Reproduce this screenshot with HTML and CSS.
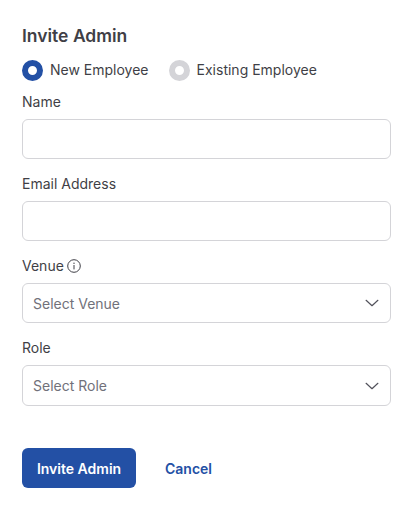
FILE: index.html
```html
<!DOCTYPE html>
<html lang="en">
<head>
<meta charset="utf-8">
<title>Invite Admin</title>
<link rel="stylesheet" href="styles.css">
</head>
<body>
<form class="modal">
  <h1 class="title">Invite Admin</h1>
  <div class="radios">
    <label class="radio"><span class="dot dot-on"></span>New Employee</label>
    <label class="radio"><span class="dot dot-off"></span>Existing Employee</label>
  </div>
  <div class="field">
    <div class="label">Name</div>
    <div class="input"></div>
  </div>
  <div class="field">
    <div class="label">Email Address</div>
    <div class="input"></div>
  </div>
  <div class="field">
    <div class="label">Venue
      <svg class="info" width="14" height="14" viewBox="0 0 14 14" fill="none" stroke="#3f3f46" stroke-width="1"><circle cx="7" cy="7" r="6.3"/><path d="M7 6.4v3.6" stroke-linecap="round"/><circle cx="7" cy="4.2" r="0.7" fill="#3f3f46" stroke="none"/></svg>
    </div>
    <div class="input select"><span>Select Venue</span>
      <svg width="14" height="8" viewBox="0 0 14 8" fill="none" stroke="#52525b" stroke-width="1.2" stroke-linecap="round" stroke-linejoin="round"><path d="M1.1 1.3 7 6.7l5.9-5.4"/></svg>
    </div>
  </div>
  <div class="field">
    <div class="label">Role</div>
    <div class="input select select-last"><span>Select Role</span>
      <svg width="14" height="8" viewBox="0 0 14 8" fill="none" stroke="#52525b" stroke-width="1.2" stroke-linecap="round" stroke-linejoin="round"><path d="M1.1 1.3 7 6.7l5.9-5.4"/></svg>
    </div>
  </div>
  <div class="actions">
    <button type="button" class="btn-primary">Invite Admin</button>
    <button type="button" class="btn-link">Cancel</button>
  </div>
</form>
</body>
</html>
```
FILE: styles.css
```css
* { box-sizing: border-box; }
html, body { margin: 0; background: #fff; }
body { width: 412px; height: 510px; overflow: hidden; font-family: Inter, "Liberation Sans", sans-serif; color: #3f3f46; }
.modal { padding: 24px 22px 0; display: flex; flex-direction: column; }
.title { margin: 0; font-size: 17.5px; line-height: 24px; font-weight: 600; color: #3f3f46; }
.radios { display: flex; gap: 20px; margin-top: 10px; height: 24px; align-items: center; }
.radio { display: flex; align-items: center; gap: 7px; font-size: 14px; line-height: 20px; }
.dot { width: 21px; height: 21px; border-radius: 50%; display: block; border-style: solid; border-width: 6px; background: #fff; }
.dot-on { border-color: #2350a5; }
.dot-off { border-color: #d4d4d8; }
.field { display: flex; flex-direction: column; }
.radios + .field { margin-top: 10px; }
.field + .field { margin-top: 15px; }
.label { font-size: 14px; line-height: 20px; height: 20px; display: flex; align-items: center; gap: 3px; margin-bottom: 7px; }
.input { height: 40px; width: 369px; border: 1px solid #d4d4d8; border-radius: 6px; background: #fff; }
.select { display: flex; align-items: center; justify-content: space-between; padding: 0 11px 0 10px; font-size: 14px; color: #71717a; }
.select-last { height: 41px; }
.actions { display: flex; align-items: center; gap: 29px; margin-top: 42px; }
.btn-primary { width: 114px; height: 40px; border: 0; border-radius: 6px; background: #2350a5; color: #fff; font: 600 14px Inter, "Liberation Sans", sans-serif; padding: 0; }
.btn-link { border: 0; background: none; padding: 0; color: #2350a5; font: 600 14px Inter, "Liberation Sans", sans-serif; }
```
